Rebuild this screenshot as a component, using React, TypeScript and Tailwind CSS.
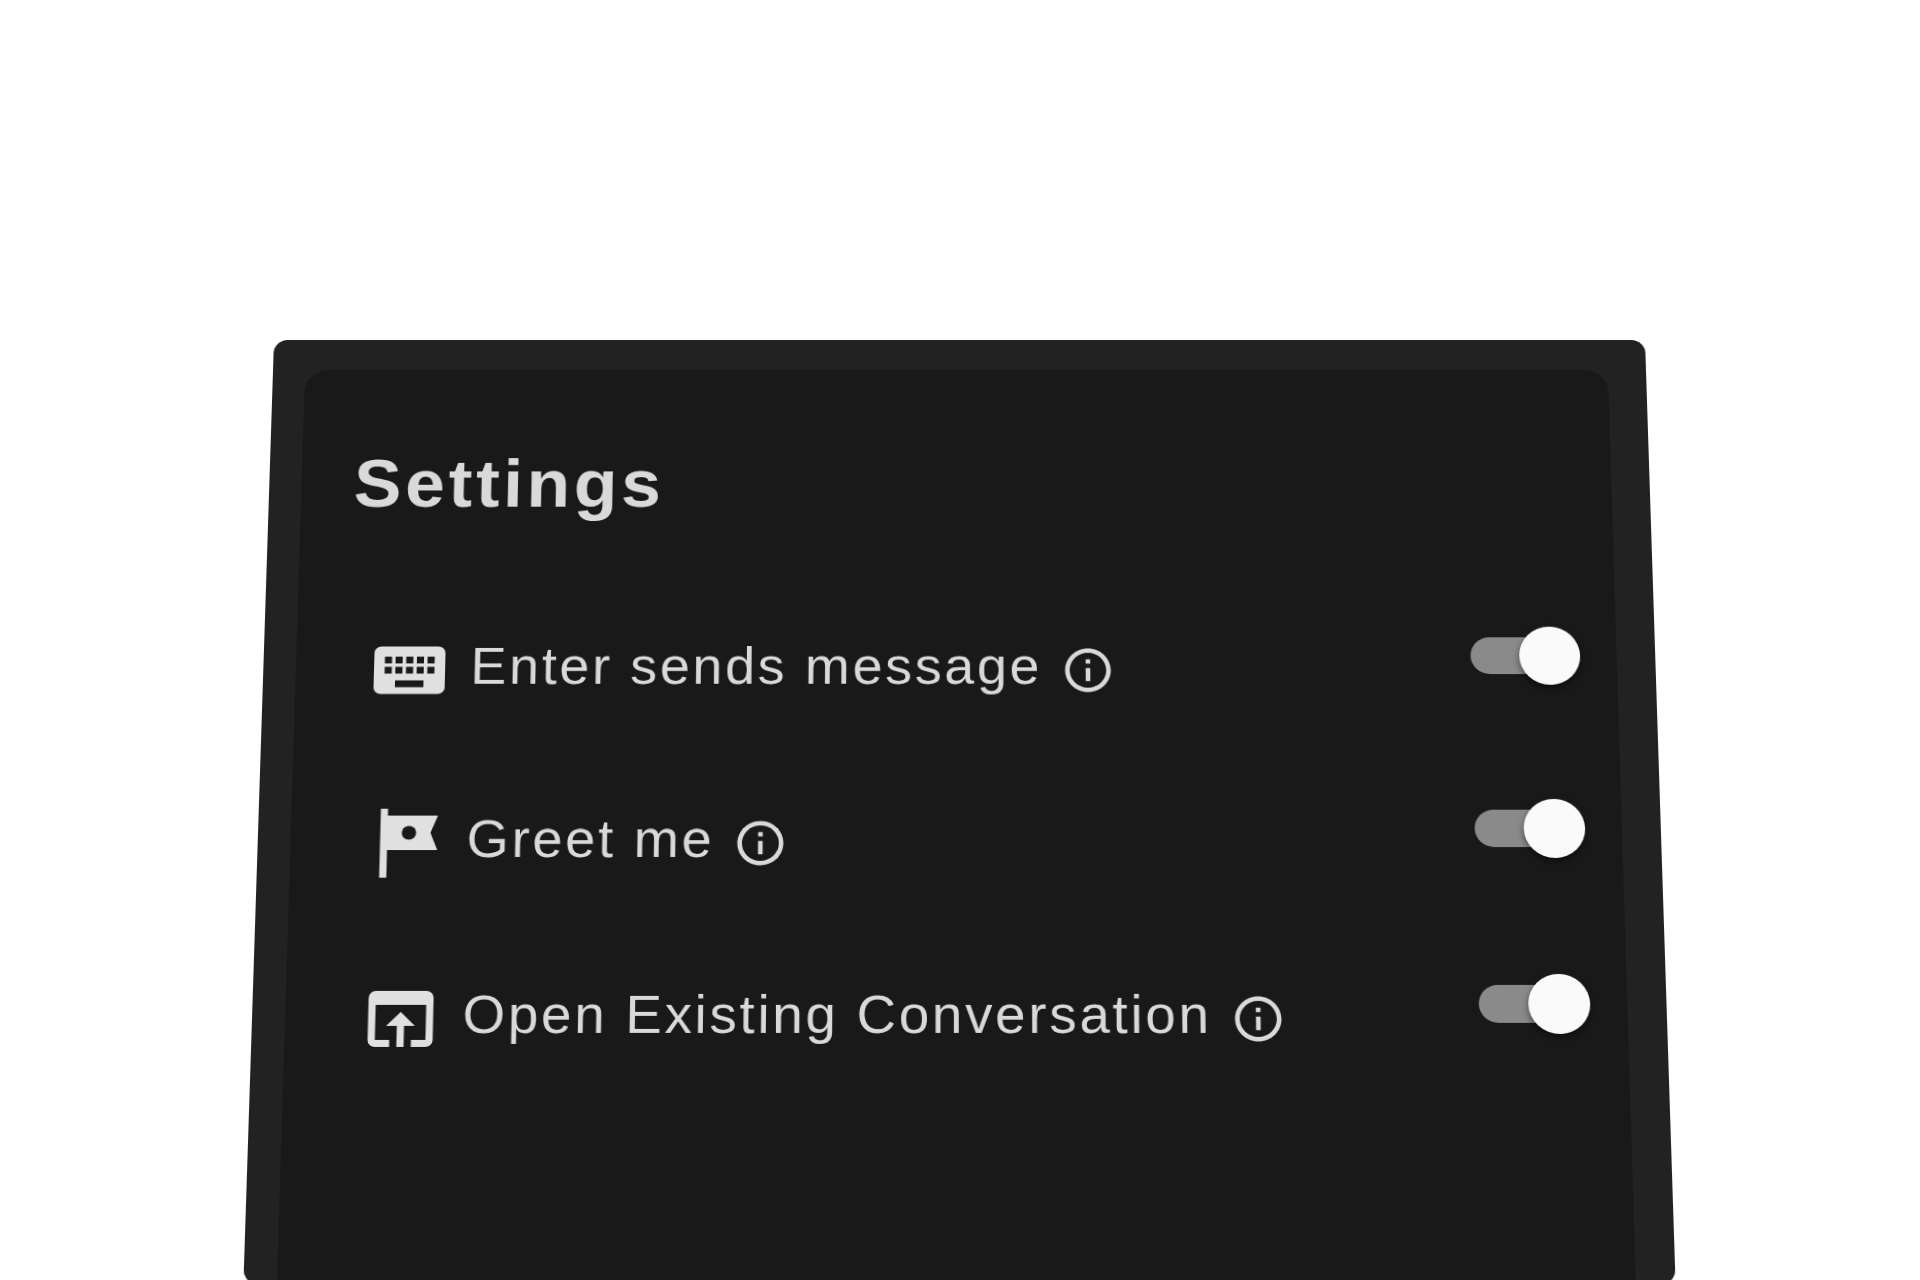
import { useState } from "react";
import type { IconType } from "react-icons";
import { MdInfoOutline, MdKeyboard, MdOpenInBrowser, MdTour } from "react-icons/md";

type Setting = { id: string; label: string; Icon: IconType };

const settings: Setting[] = [
  { id: "enter-sends", label: "Enter sends message", Icon: MdKeyboard },
  { id: "greet-me", label: "Greet me", Icon: MdTour },
  { id: "open-existing", label: "Open Existing Conversation", Icon: MdOpenInBrowser },
];

function Switch({ id }: { id: string }) {
  const [on, setOn] = useState(true);
  return (
    <input
      id={id}
      type="checkbox"
      role="switch"
      checked={on}
      onChange={(e) => setOn(e.target.checked)}
      className="relative flex h-15 w-27 shrink-0 cursor-pointer appearance-none items-center before:h-[38px] before:w-full before:rounded-full before:bg-[#8a8a8a] after:absolute after:left-0 after:size-15 after:rounded-full after:bg-[#fafafa] after:shadow-[0_3px_6px_rgba(0,0,0,0.5)] checked:after:left-12"
    />
  );
}

function SettingRow({ id, label, Icon }: Setting) {
  return (
    <li className="flex h-[177px] items-center justify-between">
      <div className="flex items-center gap-[18px] pt-[30px]">
        <Icon className="size-21 shrink-0 text-[#e0e0e0]" aria-hidden="true" />
        <label htmlFor={id} className="pb-2 text-[53px] leading-[60px] tracking-wider whitespace-nowrap">
          {label}
        </label>
        <button type="button" aria-label={`About ${label}`} className="shrink-0 cursor-pointer">
          <MdInfoOutline className="size-[54px]" />
        </button>
      </div>
      <Switch id={id} />
    </li>
  );
}

export default function App() {
  return (
    <main className="h-screen overflow-hidden bg-white pt-[340px] font-['Liberation_Sans',Arial,sans-serif]">
      {/* The panel leans back from the viewer, so it narrows towards its top edge. */}
      <section className="mx-auto flex min-h-[962px] w-5/7 origin-top flex-col rounded-[14px] bg-[#222222] pt-8 pr-[38px] pl-8 outline outline-transparent [transform:perspective(7700px)_rotateX(20deg)]">
        <div className="grow rounded-t-3xl bg-[#191919] pt-20 pr-9 pl-[52px] text-[#d9d9d9]">
          <h1 className="text-[71px] leading-[80px] font-bold tracking-wider">Settings</h1>
          <ul className="mt-[50px] pl-[18px]">
            {settings.map((setting) => (
              <SettingRow key={setting.id} {...setting} />
            ))}
          </ul>
        </div>
      </section>
    </main>
  );
}
